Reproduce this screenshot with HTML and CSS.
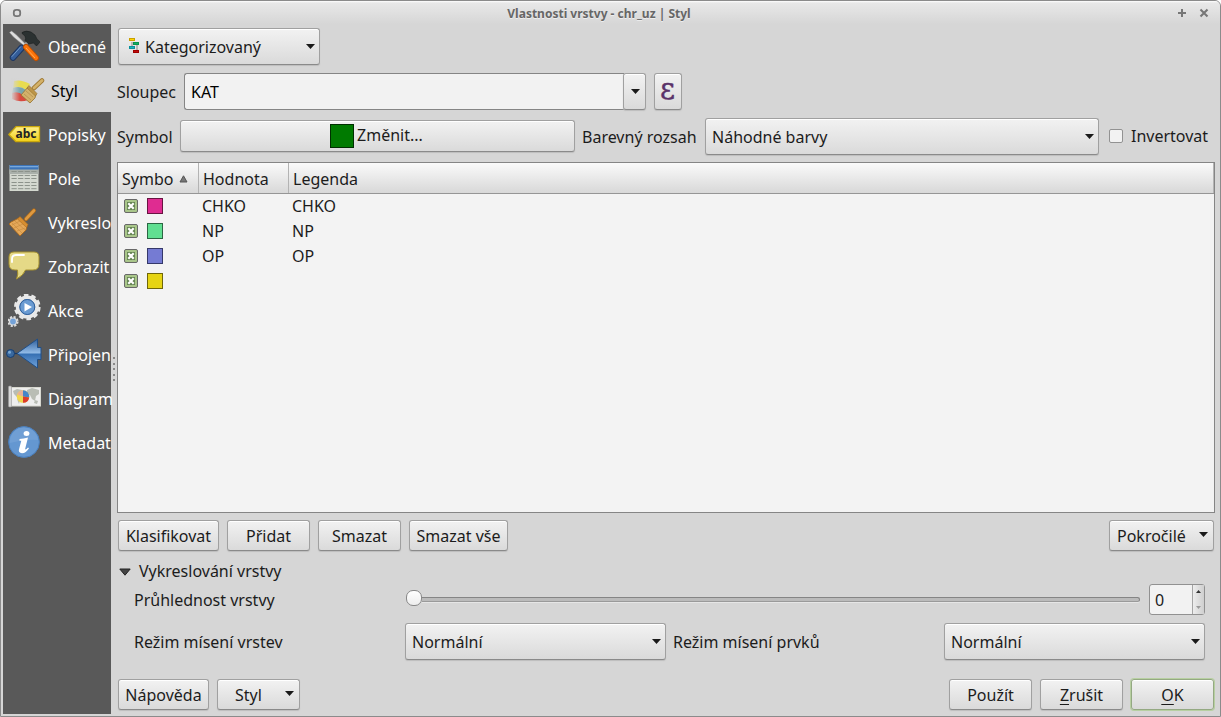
FILE: index.html
```html
<!DOCTYPE html>
<html lang="cs">
<head>
<meta charset="utf-8">
<title>Vlastnosti vrstvy</title>
<link rel="stylesheet" href="styles.css">
</head>
<body>
<div class="window">
  <header class="titlebar">
    <svg class="tb-menu" width="10" height="10" viewBox="0 0 10 10"><rect x="1.8" y="1.8" width="6.4" height="6.4" rx="2.4" fill="none" stroke="#777" stroke-width="1.8"/></svg>
    <h1 class="title">Vlastnosti vrstvy - chr_uz | Styl</h1>
    <svg class="tb-max" width="10" height="10" viewBox="0 0 10 10"><path d="M5 1v8M1 5h8" stroke="#777" stroke-width="2"/></svg>
    <svg class="tb-close" width="10" height="10" viewBox="0 0 10 10"><path d="M1.5 1.5l7 7M8.500 1.500l-7 7" stroke="#777" stroke-width="2.100"/></svg>
  </header>
  <div class="body">
    <nav class="sidebar">
      <div class="item">
        <svg width="34" height="34" viewBox="0 0 34 34">
          <path d="M1.500 2.500l2-1.500 4.500 3.500 10 10-1.500 1.500L5.500 7z" fill="#ddd" stroke="#888" stroke-width=".5"/>
          <path d="M23 9l-7 7" stroke="#aaa" stroke-width="3"/>
          <path d="M14 2.500q4-2.500 9-.5l4 3q1 3.500 5 7l-3.500 4-3-3-5 1-3.500-3.500q2-4-3-7z" fill="#2b3131" stroke="#151818" stroke-width=".5"/>
          <path d="M13.500 18L5 27.500" stroke="#1c3560" stroke-width="6.500" stroke-linecap="round"/>
          <path d="M13.500 18L5 27.500" stroke="#345d99" stroke-width="4.500" stroke-linecap="round"/>
          <path d="M12.500 17L4 26.500" stroke="#7199c7" stroke-width="1" stroke-linecap="round"/>
          <path d="M18 17l10 11" stroke="#b94d00" stroke-width="6" stroke-linecap="round"/>
          <path d="M18 17l10 11" stroke="#fb730a" stroke-width="4.200" stroke-linecap="round"/>
          <path d="M18 18l9 10" stroke="#ffab52" stroke-width="1"/>
        </svg>
        <span>Obecné</span>
      </div>
      <div class="item active">
        <svg width="34" height="34" viewBox="0 0 34 34">
          <defs><linearGradient id="fade"><stop offset="0" stop-color="#d5d5d5"/><stop offset="1" stop-color="#d5d5d5" stop-opacity="0"/></linearGradient></defs>
          <path d="M3 7q7-2 16 3l-4 6Q8 11 2 14z" fill="#e8dc50"/>
          <path d="M2 14q7-3 13 2l-3 5Q7 18 1 19z" fill="#7aa5ae"/>
          <path d="M1 19q6-2 11 2l5 5q-8 3-16-1z" fill="#d8493f"/>
          <rect x="0" y="4" width="9" height="23" fill="url(#fade)"/>
          <path d="M31 6.500L23 14" stroke="#a07a35" stroke-width="4.500" stroke-linecap="round"/>
          <path d="M31 6.500L23 14" stroke="#d3b169" stroke-width="2.800" stroke-linecap="round"/>
          <path d="M17 13l8 7-1 4-5 5-9-8z" fill="#d3b16a" stroke="#94712e" stroke-width=".8"/>
          <path d="M18 11.500l8 8-1.500 2.500-8.500-8z" fill="#bd9547" stroke="#94712e" stroke-width=".6"/>
          <path d="M13 20l7 6M15 17l7 6" stroke="#a98545" stroke-width=".6"/>
        </svg>
        <span>Styl</span>
      </div>
      <div class="item">
        <svg width="34" height="34" viewBox="0 0 34 34">
          <defs><linearGradient id="tag" x2="0" y2="1"><stop offset="0" stop-color="#fff08a"/><stop offset="1" stop-color="#f0cf18"/></linearGradient></defs>
          <path d="M.8 16.500L8 8.700h23.500v15H8z" fill="url(#tag)" stroke="#c9a70c" stroke-width="1.300" stroke-linejoin="round"/>
          <text x="7.500" y="20" class="tag-text" textLength="21" lengthAdjust="spacingAndGlyphs">abc</text>
        </svg>
        <span>Popisky</span>
      </div>
      <div class="item">
        <svg width="34" height="34" viewBox="0 0 34 34">
          <rect x="1.500" y="3" width="29" height="26" fill="#d3d8cf"/>
          <rect x="1.500" y="7" width="29" height="5" fill="#a9b0aa"/>
          <rect x="1.500" y="3" width="29" height="4.500" fill="#3d74b8"/><rect x="2" y="4" width="28" height="1.300" fill="#78a8dc"/>
          <path d="M3.500 9.500h25M3.500 13.500h25M3.500 16.500h25M3.500 20.500h25M3.500 23.500h25M3.500 26.700h25" stroke="#8c938b" stroke-width="1" stroke-dasharray="5.200 1.400"/>
        </svg>
        <span>Pole</span>
      </div>
      <div class="item">
        <svg width="34" height="34" viewBox="0 0 34 34">
          <path d="M26 4.500L18 13" stroke="#a8681d" stroke-width="4.200" stroke-linecap="round"/>
          <path d="M26 4.500L18 13" stroke="#df9a40" stroke-width="2.600" stroke-linecap="round"/>
          <path d="M11 12l8 8-1 4-6 6L1 18l2-2z" fill="#e5a859" stroke="#a8681d" stroke-width=".9"/>
          <path d="M12 10.500l8 8-1.500 3-9-8.500z" fill="#d68d30" stroke="#a8681d" stroke-width=".6"/>
          <path d="M4 19l8-4M6 22l9-4M9 25l8-3M7 15l10 9M4 17l10 10" stroke="#c4883c" stroke-width=".6"/>
        </svg>
        <span>Vykreslo</span>
      </div>
      <div class="item">
        <svg width="34" height="34" viewBox="0 0 34 34">
          <path d="M6 2h20q5 0 5 5v7q0 6-6 6h-7.500q-2 5.500-9 9 2-5 1-9H7q-6 0-6-6V7q0-5 5-5z" fill="#e5d987" stroke="#a5902e"/>
          <path d="M4 12V9q0-4 4-4h8" fill="none" stroke="#fff" stroke-width="1.800" stroke-linecap="round"/>
        </svg>
        <span>Zobrazit</span>
      </div>
      <div class="item">
        <svg width="34" height="34" viewBox="0 0 34 34">
          <circle cx="19.300" cy="13" r="11.800" fill="none" stroke="#e8e8e8" stroke-width="3" stroke-dasharray="4.500 2.914"/>
          <circle cx="19.300" cy="13" r="9.700" fill="#5485c1" stroke="#e8e8e8" stroke-width="3.600"/>
          <circle cx="19.300" cy="13" r="7.500" fill="#6a9bd2" stroke="#315f99"/>
          <path d="M16.500 9l7.500 4-7.500 4.500z" fill="#fff"/>
          <circle cx="5" cy="27.500" r="4.700" fill="none" stroke="#ddd" stroke-width="1.800" stroke-dasharray="2.200 1.490"/>
          <circle cx="5" cy="27.500" r="3.500" fill="#74a2d8" stroke="#ddd" stroke-width="1.200"/>
        </svg>
        <span>Akce</span>
      </div>
      <div class="item">
        <svg class="wide" width="38" height="34" viewBox="0 0 38 34">
          <defs><linearGradient id="join" x2="0" y2="1"><stop offset="0" stop-color="#2f5f9c"/><stop offset=".48" stop-color="#91bae6"/><stop offset=".52" stop-color="#3670b3"/><stop offset="1" stop-color="#71a3da"/></linearGradient></defs>
          <path d="M9 15.500h6" stroke="#173966" stroke-width="1.200"/>
          <circle cx="5.500" cy="15.500" r="4" fill="#39699f" stroke="#173e70"/><circle cx="4.500" cy="14.300" r="1.500" fill="#79a8d5"/>
          <path d="M12 15.500L32.500 1v8.500H36v12h-3.500V30z" fill="url(#join)" stroke="#214f87"/>
        </svg>
        <span>Připojen</span>
      </div>
      <div class="item">
        <svg width="34" height="34" viewBox="0 0 34 34">
          <rect x="1.500" y="5.500" width="31" height="18.500" fill="#eee" stroke="#d8d8d0"/>
          <rect x=".5" y="4" width="3" height="21" rx="1" fill="#d8d8d8" stroke="#999" stroke-width=".6"/>
          <path d="M5 9l4-2 5 1-1 4-4 3-3-3zM19 8l5-2 7 2v4l-3 2-1 5-3-2-2-4-3-1zM27 18l3 1-1 3-3-1zM9 17l3 1-1 4z" fill="#b9bdb5"/>
          <circle cx="15" cy="14.500" r="6.300" fill="#f1d74d"/>
          <path d="M15 14.500V8.200A6.300 6.300 0 0 1 21.200 15.500z" fill="#4685c8"/><path d="M15 14.500l6.200 1A6.300 6.300 0 0 1 15 20.800z" fill="#dd3b2b"/><path d="M15 14.500V8.200A6.300 6.300 0 0 0 9.200 12.500z" fill="#e8b097"/>
        </svg>
        <span>Diagram</span>
      </div>
      <div class="item">
        <svg width="34" height="34" viewBox="0 0 34 34">
          <circle cx="16" cy="16" r="15.400" fill="#6497d1" stroke="#4a7fbd"/><path d="M2 17A14 14 0 0 1 30 14Q16 13 2 17z" fill="#82addd" opacity=".4"/>
          <ellipse cx="18.500" cy="7.500" rx="2.900" ry="2.500" fill="#fff"/>
          <path d="M11.500 13q4-.5 8.500-1.500l-3 12q1.500 0 3-2l1 .8q-3 5-7 5-4-.4-3-4l2.300-8.500H11.500z" fill="#fff"/>
        </svg>
        <span>Metadat</span>
      </div>
    </nav>
    <div class="splitter"><i></i><i></i><i></i><i></i><i></i></div>
    <main class="main">
      <div class="row renderer-row">
        <div class="box combo renderer">
          <svg width="14" height="18" viewBox="0 0 14 18"><path d="M4 5v6M9 8v7" stroke="#888"/><g stroke-width="1"><rect x="1.500" y="1.500" width="5" height="2" fill="#ffd500" stroke="#c9a000"/><rect x="5.500" y="5.500" width="5" height="2" fill="#12ad62" stroke="#08934f"/><rect x="1.500" y="9.500" width="5" height="2" fill="#19afbd" stroke="#08919c"/><rect x="5.500" y="13.500" width="5" height="2" fill="#c50c0c" stroke="#9c0000"/></g></svg>
          <span>Kategorizovaný</span><b class="arrow"></b>
        </div>
      </div>
      <div class="row column-row">
        <label class="col-label">Sloupec</label>
        <div class="field">KAT</div>
        <div class="box drop"><b class="arrow"></b></div>
        <div class="box expr">ε</div>
      </div>
      <div class="row symbol-row">
        <label class="sym-label">Symbol</label>
        <div class="box change"><i class="preview"></i><span>Změnit...</span></div>
        <label class="ramp-label">Barevný rozsah</label>
        <div class="box combo ramp"><span>Náhodné barvy</span><b class="arrow"></b></div>
        <i class="check"></i><label class="invert">Invertovat</label>
      </div>
      <section class="table">
        <div class="thead">
          <div class="th c1"><span class="cut">Symbo</span><svg width="9" height="8" viewBox="0 0 9 8"><path d="M4.500 .8L8 7H1z" fill="#777" stroke="#555"/></svg></div>
          <div class="th c2">Hodnota</div>
          <div class="th c3">Legenda</div>
        </div>
        <div class="tr"><div class="td c1"><svg class="on" width="14" height="14" viewBox="0 0 14 14"><use href="#tick"/></svg><i class="sw pink"></i></div><div class="td c2">CHKO</div><div class="td">CHKO</div></div>
        <div class="tr"><div class="td c1"><svg class="on" width="14" height="14" viewBox="0 0 14 14"><use href="#tick"/></svg><i class="sw green"></i></div><div class="td c2">NP</div><div class="td">NP</div></div>
        <div class="tr"><div class="td c1"><svg class="on" width="14" height="14" viewBox="0 0 14 14"><use href="#tick"/></svg><i class="sw blue"></i></div><div class="td c2">OP</div><div class="td">OP</div></div>
        <div class="tr"><div class="td c1"><svg class="on" width="14" height="14" viewBox="0 0 14 14"><defs><g id="tick"><rect x=".5" y=".5" width="13" height="13" rx="1.500" fill="#a9c68a" stroke="#686868"/><rect x="3" y="3" width="8" height="8" fill="#648452"/><path d="M4.300 4.300l5.400 5.400M9.700 4.300L4.300 9.700" stroke="#fff" stroke-width="2.200"/></g></defs><use href="#tick"/></svg><i class="sw yellow"></i></div></div>
      </section>
      <div class="row class-row">
        <div class="box btn w101">Klasifikovat</div>
        <div class="box btn">Přidat</div>
        <div class="box btn">Smazat</div>
        <div class="box btn w99">Smazat vše</div>
        <div class="box btn menu advanced"><span>Pokročilé</span><b class="arrow"></b></div>
      </div>
      <div class="row group-row"><svg width="12" height="8" viewBox="0 0 12 8"><path d="M.8 1h10.400L6 7.200z" fill="#444" stroke="#222"/></svg><span>Vykreslování vrstvy</span></div>
      <div class="row slider-row">
        <label class="wide-label">Průhlednost vrstvy</label>
        <div class="slider"><i class="knob"></i><i class="track"></i></div>
        <div class="spin"><span>0</span><div class="steps"><b class="up"></b><b class="down"></b></div></div>
      </div>
      <div class="row blend-row">
        <label class="wide-label">Režim mísení vrstev</label>
        <div class="box combo blend"><span>Normální</span><b class="arrow"></b></div>
        <label class="feat-label">Režim mísení prvků</label>
        <div class="box combo blend"><span>Normální</span><b class="arrow"></b></div>
      </div>
      <footer class="row foot">
        <div class="box btn w91">Nápověda</div>
        <div class="box btn menu style-btn"><span>Styl</span><b class="arrow"></b></div>
        <div class="box btn push">Použít</div>
        <div class="box btn"><span><u>Z</u>rušit</span></div>
        <div class="box btn default"><span><u>O</u>K</span></div>
      </footer>
    </main>
  </div>
</div>
</body>
</html>
```
FILE: styles.css
```css
* { box-sizing: border-box; }
body { margin: 0; background: #fff; overflow: hidden; }
.window {
  width: 1221px; height: 717px; display: flex; flex-direction: column;
  border: 1px solid #8b8b8b; border-radius: 6px 6px 0 0; background: #d6d6d6;
  font: 16px/22px "Noto Sans", sans-serif; color: #1c1c1c; white-space: nowrap; overflow: hidden;
}
.titlebar {
  height: 23px; flex: none; display: flex; align-items: center; padding: 0 11px;
  background: linear-gradient(#fff 0, #e8e8e8 2px, #d6d6d6); color: #666;
}
.title { flex: 1; margin: 0; padding: 2px 1px 0 0; text-align: center; font-size: 12px; line-height: 18px; font-weight: 700; text-shadow: 0 1px #eee; }
.tb-max { margin-right: 12px; }
.body { flex: 1; display: flex; min-height: 0; padding: 0 5px 2px 2px; }
.sidebar { width: 108px; flex: none; background: #595959; }
.item { height: 44px; display: flex; align-items: center; padding-left: 5px; color: #fff; }
.item svg { flex: none; margin: 2px 6px 0 0; }
.item .wide { margin: 2px 5px 0 -3px; }
.item span { padding-top: 2px; }
.item.active { background: #d6d6d6; color: #000; padding-left: 8px; }
.tag-text { font: bold 12px "Noto Sans", sans-serif; fill: #222; }
.splitter { width: 6px; flex: none; display: flex; flex-direction: column; align-items: center; justify-content: center; gap: 3.500px; }
.splitter i { width: 2px; height: 2px; background: #888; }
.main { flex: 1; min-width: 0; display: flex; flex-direction: column; }
.row { display: flex; align-items: center; flex: none; }
.box {
  display: flex; align-items: center; flex: none; border: 1px solid #a0a0a0; border-bottom-color: #8a8a8a; border-radius: 3px;
  background: linear-gradient(#f2f2f2, #dadada); box-shadow: inset 0 1px #fff, 0 1px 1px #bdbdbd;
}
.arrow { width: 9px; height: 5px; background: #1a1a1a; clip-path: polygon(0 0, 100% 0, 50% 100%); flex: none; }
.combo { height: 37px; padding: 0 4px 0 6px; }
.combo .arrow { margin-left: auto; }
.renderer-row { height: 37px; margin: 4px 0 0 1px; }
.renderer { width: 202px; padding-left: 9px; }
.renderer svg { margin: 0 3px 1px 0; }
.column-row { height: 37px; margin-top: 8px; }
.col-label { width: 67px; }
.field { width: 440px; height: 37px; padding: 7px 6px; border: 1px solid #858585; border-right: 0; border-radius: 3px 0 0 3px; background: #f2f2f2; color: #000; }
.drop { width: 23px; height: 37px; margin-left: -1px; padding-left: 2px; justify-content: center; }
.expr { width: 28px; height: 37px; margin-left: 8px; justify-content: center; padding: 0 1px 6px 0; font: 29px/30px "DejaVu Serif", serif; color: #5b3269; -webkit-text-stroke: .4px #5b3269; }
.symbol-row { height: 37px; margin-top: 8px; }
.sym-label { width: 63px; }
.change { width: 395px; height: 32px; justify-content: center; gap: 3px; padding: 0 2px 2px 0; margin-bottom: 1px; }
.preview { width: 24px; height: 24px; margin-top: 1px; background: #007a00; border: 1px solid #002f00; }
.ramp-label { width: 123px; margin-left: 7px; }
.ramp { width: 394px; }
.check { width: 14px; height: 14px; margin: 0 8px 1px 10px; border: 1px solid #929292; border-radius: 2px; background: #f2f2f2; }
.invert { padding-bottom: 2px; }
.table { width: 1098px; height: 351px; margin-top: 7px; border: 1px solid #858585; background: #f3f3f3; flex: none; }
.thead { height: 31px; display: flex; background: linear-gradient(#fafafa, #d8d8d8); border-bottom: 1px solid #959595; margin-bottom: -1px; }
.th { display: flex; align-items: center; padding: 2px 0 0 4px; border-right: 1px solid #b3b3b3; }
.th.c1 { width: 81px; }
.th svg { margin-left: 6px; }
.th.c2 { width: 90px; }
.th.c3 { flex: 1; }
.cut { width: 51px; }
.tr { height: 25px; display: flex; align-items: center; }
.td.c1 { width: 84px; padding-left: 6px; display: flex; gap: 9px; }
.td.c2 { width: 90px; }
.on { margin-top: 1px; }
.sw { width: 16px; height: 16px; border: 1px solid; }
.pink { background: #df2c91; border-color: #681442; }
.green { background: #60df91; border-color: #2b6643; }
.blue { background: #757bd3; border-color: #35386a; }
.yellow { background: #e6d413; border-color: #6f6609; }
.class-row { height: 31px; margin: 7px 0 0 1px; gap: 8px; }
.btn { width: 83px; height: 31px; justify-content: center; }
.w101 { width: 101px; }
.w99 { width: 99px; }
.w91 { width: 91px; }
.menu { justify-content: space-between; padding: 0 5px 0 7px; }
.menu .arrow { margin-bottom: 2px; }
.advanced { width: 105px; margin-left: auto; margin-right: 1px; }
.group-row { height: 22px; margin: 9px 0 0 2px; gap: 8px; }
.group-row svg { margin-top: 2px; }
.slider-row { height: 31px; margin: 2px 10px 0 17px; }
.wide-label { width: 271px; }
.slider { width: 735px; display: flex; align-items: center; padding: 0 0 3px 1px; }
.knob { width: 16px; height: 16px; border: 1px solid #888; border-radius: 7px; background: linear-gradient(#fff, #ededed); }
.track { flex: 1; height: 5px; margin-top: 3px; border: 1px solid #858585; border-bottom-color: #9a9a9a; border-left: 0; border-radius: 0 3px 3px 0; background: #bbb; box-shadow: 0 1px #e6e6e6; }
.spin { width: 56px; height: 31px; margin-left: 9px; display: flex; align-items: center; border: 1px solid #919191; border-radius: 3px; background: #f2f2f2; }
.spin span { flex: 1; padding-left: 5px; }
.steps { width: 12px; height: 29px; display: flex; flex-direction: column; align-items: center; justify-content: space-between; padding: 5px 0; background: linear-gradient(90deg, #ededed, #cfcfcf); border-left: 1px solid #a5a5a5; }
.up, .down { width: 5px; height: 3px; background: #333; clip-path: polygon(50% 0, 100% 100%, 0 100%); }
.down { background: #999; clip-path: polygon(0 0, 100% 0, 50% 100%); }
.blend-row { height: 37px; margin: 8px 10px 0 17px; }
.blend { width: 261px; }
.feat-label { width: 271px; margin-left: 7px; }
.foot { height: 31px; margin: 19px 1px 0 1px; gap: 8px; }
.style-btn { padding-left: 17px; }
.push { margin-left: auto; }
.default { border-color: #94a982; box-shadow: inset 0 1px #fff, 0 0 0 1px #b7cfa1; }
u { text-underline-offset: 3px; text-decoration-thickness: 1px; }
```
